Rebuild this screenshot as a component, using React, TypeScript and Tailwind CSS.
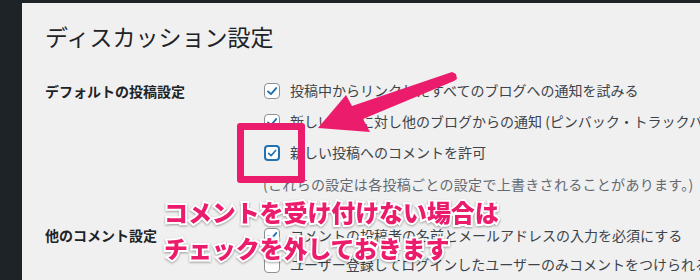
const PINK = "#ec1c6c"

function Check({ checked = true, focus = false }: { checked?: boolean; focus?: boolean }) {
  return (
    <span
      className={
        "flex h-[16px] w-[16px] shrink-0 items-center justify-center rounded-[4px] bg-white " +
        (focus ? "border-2 border-[#2271b1]" : "border border-[#8c8f94]")
      }
    >
      {checked && (
        <svg width="14" height="14" viewBox="0 0 16 16" fill="none">
          <path d="M3.5 8.5 L6.8 11.6 L12.8 4.6" stroke="#2271b1" strokeWidth="2.2" strokeLinecap="round" strokeLinejoin="round" />
        </svg>
      )}
    </span>
  )
}

function Row({ text, checked, focus, h }: { text: string; checked?: boolean; focus?: boolean; h: string }) {
  return (
    <div className={"flex items-center gap-[10px] pl-[1px] text-[#3c434a] " + h}>
      <Check checked={checked} focus={focus} />
      <span className="whitespace-nowrap">{text}</span>
    </div>
  )
}

export default function App() {
  return (
    <div className="relative h-[280px] w-[700px] overflow-hidden bg-[#f0f0f0] font-['Noto_Sans_CJK_JP',sans-serif] text-[14px] text-[#1d2327]">
      <div className="h-[3px] bg-[#1d2327]" />
      <div className="flex h-[277px]">
        <div className="w-[22px] shrink-0 bg-[#1d2327]" />
        <div className="flex-1 pl-[23px]">
          <h1 className="mt-[19px] h-[29px] text-[23px] leading-[29px] font-normal">ディスカッション設定</h1>

          <div className="mt-[24px] flex">
            <div className="w-[218px] shrink-0 pt-[6px] font-bold">デフォルトの投稿設定</div>
            <div className="flex flex-col">
              <Row h="h-[31px]" text="投稿中からリンクしたすべてのブログへの通知を試みる" />
              <Row h="h-[31px]" text="新しい投稿に対し他のブログからの通知 (ピンバック・トラックバック) を受け付ける" />
              <Row h="h-[31px]" focus text="新しい投稿へのコメントを許可" />
              <div className="flex h-[32px] items-center whitespace-nowrap tracking-[0.3px] text-[#646970]">
                (これらの設定は各投稿ごとの設定で上書きされることがあります。)
              </div>
            </div>
          </div>

          <div className="mt-[21px] flex">
            <div className="flex h-[29px] w-[218px] shrink-0 items-center font-bold">他のコメント設定</div>
            <div className="flex flex-col">
              <Row h="h-[29px]" text="コメントの投稿者の名前とメールアドレスの入力を必須にする" />
              <Row h="h-[29px]" checked={false} text="ユーザー登録してログインしたユーザーのみコメントをつけられるようにする" />
            </div>
          </div>
        </div>
      </div>

      {/* annotation: frame */}
      <div className="absolute left-[237px] top-[123px] h-[60px] w-[68px] rounded-[3px] border-[7px] border-[#ec1c6c]" />

      {/* annotation: arrow */}
      <svg className="absolute left-0 top-0" width="700" height="280" viewBox="0 0 700 280">
        <polygon
          points="318,128 346,95 352,106 452,72 456,74 457,79 454,81 363,119 370,132"
          fill={PINK}
          strokeLinejoin="round"
        />
      </svg>

      {/* annotation: text */}
      <div className="absolute left-[164px] top-[194px] text-[24px] leading-[36px] font-black tracking-[-0.1px] text-[#ec1c6c] [paint-order:stroke_fill] [-webkit-text-stroke:4px_#ffffff] [filter:drop-shadow(0_1px_1px_rgba(0,0,0,0.35))]">
        <div className="whitespace-nowrap">コメントを受け付けない場合は</div>
        <div className="whitespace-nowrap">チェックを外しておきます</div>
      </div>
    </div>
  )
}
